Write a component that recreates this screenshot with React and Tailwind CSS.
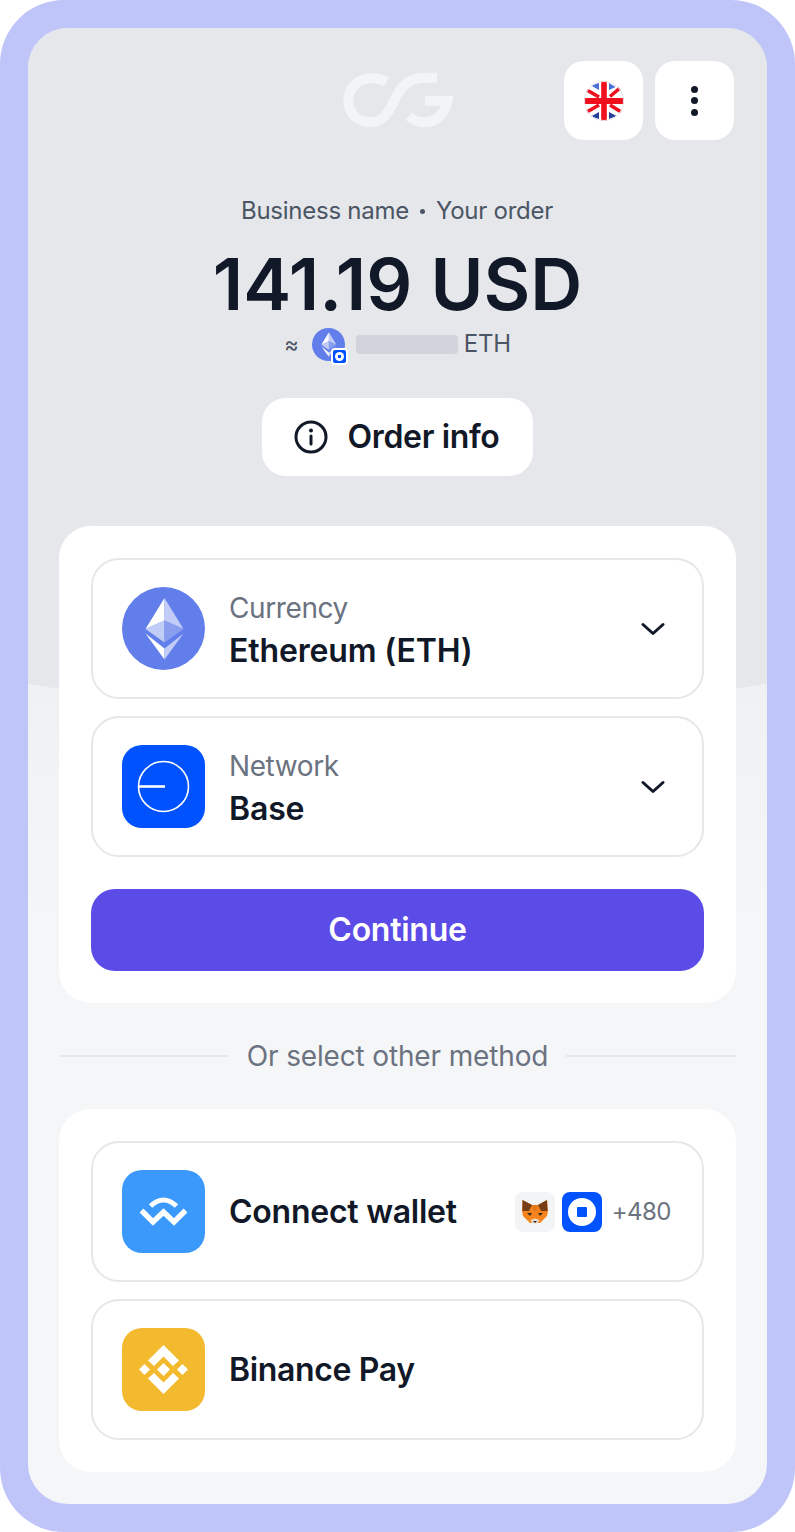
import React from "react";

function EthGlyph({ size }) {
  return (
    <svg width={size} height={size} viewBox="0 0 83 83" className="block">
      <circle cx="41.5" cy="41.5" r="41.5" fill="#627eea" />
      <path d="M42.5 11 L23.5 42 L42.5 33.5 Z" fill="#ffffff" />
      <path d="M42.5 11 L61.5 42 L42.5 33.5 Z" fill="#c1ccf7" />
      <path d="M23.5 42 L42.5 33.5 L42.5 55.5 Z" fill="#c1ccf7" />
      <path d="M61.5 42 L42.5 33.5 L42.5 55.5 Z" fill="#8a9ef0" />
      <path d="M23.5 46.5 L42.5 61.5 L42.5 72.5 Z" fill="#ffffff" />
      <path d="M61.5 46.5 L42.5 61.5 L42.5 72.5 Z" fill="#c1ccf7" />
    </svg>
  );
}

function Chevron() {
  return (
    <svg width="24" height="14" viewBox="0 0 24 14" fill="none" className="shrink-0">
      <path d="M2 2.5 L12 11.5 L22 2.5" stroke="#111827" strokeWidth="3" strokeLinecap="round" strokeLinejoin="round" />
    </svg>
  );
}

function BaseIcon() {
  return (
    <div className="flex h-[83px] w-[83px] shrink-0 items-center justify-center rounded-[20px] bg-[#0052ff]">
      <svg width="83" height="83" viewBox="0 0 83 83" fill="none">
        <circle cx="41.5" cy="41.5" r="25" stroke="#fff" strokeWidth="1.6" />
        <path d="M16.5 41.5 H43" stroke="#fff" strokeWidth="2.6" />
      </svg>
    </div>
  );
}

function WalletConnectIcon() {
  return (
    <div className="flex h-[83px] w-[83px] shrink-0 items-center justify-center rounded-[20px] bg-[#3b99fc]">
      <svg width="83" height="83" viewBox="0 0 83 83" fill="none">
        <path d="M28.5 36 Q41.5 24 54.5 36" stroke="#fff" strokeWidth="5" />
        <path d="M19.5 40.5 L31 52 L41.5 42 L52 52 L63.5 40.5" stroke="#fff" strokeWidth="5.4" />
      </svg>
    </div>
  );
}

function BinanceIcon() {
  return (
    <div className="flex h-[83px] w-[83px] shrink-0 items-center justify-center rounded-[20px] bg-[#f3ba2f]">
      <svg width="83" height="83" viewBox="0 0 83 83" fill="#fff">
        <path d="M41.5 17 L57 32.5 L51 38 L41.5 28.5 L32 38 L26 32.5 Z" />
        <path d="M41.5 66 L57 50.5 L51 45 L41.5 54.5 L32 45 L26 50.5 Z" />
        <path d="M41.5 35 L48 41.5 L41.5 48 L35 41.5 Z" />
        <path d="M22.5 36 L28 41.5 L22.5 47 L17 41.5 Z" />
        <path d="M60.5 36 L66 41.5 L60.5 47 L55 41.5 Z" />
      </svg>
    </div>
  );
}

function Fox() {
  return (
    <div className="flex h-10 w-10 items-center justify-center rounded-lg bg-[#f3f4f6]">
      <svg width="40" height="40" viewBox="0 0 40 40">
        <path d="M7.5 8 L17 13 H23 L32 8 L33 19 L32 24 L25 31 H15 L8 24 L7 19 Z" fill="#f5841f" />
        <path d="M7.5 8 L17 13 L14 19 L7.5 19 Z" fill="#763d16" />
        <path d="M32 8 L23 13 L26 19 L32.5 19 Z" fill="#763d16" />
        <path d="M17 13 H23 L21.5 19 H18.5 Z" fill="#e2761b" />
        <path d="M12 21 H17 L15 24 Z" fill="#3a2a1c" />
        <path d="M28 21 H23 L25 24 Z" fill="#3a2a1c" />
        <path d="M15.5 28 L20 26.5 L24.5 28 L22.5 31.5 H17.5 Z" fill="#eadccf" />
        <path d="M18 29 H22 L20 31 Z" fill="#2a2018" />
      </svg>
    </div>
  );
}

function Flag() {
  return (
    <svg width="40" height="40" viewBox="0 0 40 40">
      <defs>
        <clipPath id="flag-circle">
          <circle cx="20" cy="20" r="20" />
        </clipPath>
      </defs>
      <g clipPath="url(#flag-circle)">
        <rect width="40" height="40" fill="#fff" />
        <path d="M15 2 L15 9 L7 4.5 Z" fill="#4a6fd6" />
        <path d="M25 2 L25 9 L31.5 6 Z" fill="#4a6fd6" />
        <path d="M15 38 L15 31 L7 35.5 Z" fill="#27409c" />
        <path d="M25 38 L25 31 L32.5 35 Z" fill="#27409c" />
        <path d="M2 8.5 L15 16 M36 7 L26 15.5 M2 31.5 L15 24 M38 31.5 L26 24" stroke="#f00f1c" strokeWidth="3.6" fill="none" />
        <rect x="17.2" width="5.6" height="40" fill="#f00f1c" />
        <rect y="17" width="40" height="6" fill="#f00f1c" />
      </g>
      <circle cx="20" cy="20" r="19.5" fill="none" stroke="#e5e7eb" strokeWidth="1" />
    </svg>
  );
}

function SelectRow({ icon, label, value }) {
  return (
    <div className="flex h-[141px] items-center gap-6 rounded-[28px] border-2 border-[#e5e7eb] pl-[29px] pr-[37px]">
      {icon}
      <div className="flex min-w-0 flex-1 flex-col pt-[2px]">
        <span className="text-[28px] leading-[42px] tracking-[-0.4px] text-[#6b7280]">{label}</span>
        <span className="text-[32px] font-semibold leading-[43px] tracking-[-0.15px] text-[#111827]">{value}</span>
      </div>
      <Chevron />
    </div>
  );
}

export default function App() {
  return (
    <div
      className="h-[1532px] w-[795px] rounded-[64px] bg-[#c0c5f9] p-[28px]"
      style={{ fontFamily: "Inter, sans-serif" }}
    >
      <div className="relative h-full overflow-hidden rounded-[40px] bg-linear-to-b from-[#f0f1f3] from-[45%] to-[#f5f6f8] to-[60%]">
        <div className="absolute left-[-231px] top-0 h-[684px] w-[1200px] rounded-b-[600px_133px] bg-[#e5e7eb]" />
        <div className="relative flex h-full flex-col">
          <header className="relative flex justify-end gap-3 pr-[33px] pt-[33px]">
            <svg
              width="120"
              height="70"
              viewBox="0 0 120 70"
              fill="none"
              className="absolute left-[312px] top-[37px]"
            >
              <path
                d="M46.5 17 C42 14.5 37 13.3 32 13.3 C18 13.3 8.3 23 8.3 35.3 C8.3 48 18 57.3 31 57.3 C41 57.3 47 50 53 38 C59 26 65 12.7 85 12.7 L97 12.7"
                stroke="#f3f4f6"
                strokeWidth="10"
              />
              <path
                d="M85 35.7 H107.5 C105 49 96 57.3 84 57.3 C78 57.3 73 55 69 51"
                stroke="#f3f4f6"
                strokeWidth="10"
              />
            </svg>
            <button className="flex h-[79px] w-[79px] items-center justify-center rounded-[20px] bg-white">
              <Flag />
            </button>
            <button className="flex h-[79px] w-[79px] flex-col items-center justify-center gap-[4.5px] rounded-[20px] bg-white">
              <span className="h-[7px] w-[7px] rounded-full bg-[#111827]" />
              <span className="h-[7px] w-[7px] rounded-full bg-[#111827]" />
              <span className="h-[7px] w-[7px] rounded-full bg-[#111827]" />
            </button>
          </header>

          <div className="mt-[53px] flex flex-col items-center">
            <p className="flex items-center pr-px text-[24px] leading-[36px] tracking-[-0.25px] text-[#4b5563]">
              <span>Business name</span>
              <span className="mx-[11px] h-[5px] w-[5px] rounded-full bg-[#4b5563]" />
              <span>Your order</span>
            </p>
            <h1 className="mt-[19px] text-[72px] font-semibold leading-[72px] text-[#111827]">141.19 USD</h1>
            <div className="mt-[4px] flex h-[40px] items-center text-[24px] text-[#4b5563]">
              <span className="mr-[13px] text-[22px]">≈</span>
              <div className="relative mr-[11px] h-[33px] w-[33px]">
                <EthGlyph size={33} />
                <span className="absolute bottom-[-4px] right-[-3px] flex h-[17px] w-[17px] items-center justify-center rounded-[4px] border-2 border-white bg-[#0052ff]">
                  <span className="flex h-[9px] w-[9px] items-center justify-center rounded-full bg-white">
                    <span className="h-[3px] w-[3px] bg-[#0052ff]" />
                  </span>
                </span>
              </div>
              <span className="mr-[6px] h-[19px] w-[102px] rounded bg-[#d1d5db]" />
              <span className="tracking-[-0.2px]">ETH</span>
            </div>
            <button className="mt-[34px] flex h-[78px] w-[271px] items-center justify-center gap-5 rounded-[24px] bg-white pr-[2px]">
              <svg width="34" height="34" viewBox="0 0 34 34" fill="none">
                <circle cx="17" cy="17" r="15" stroke="#111827" strokeWidth="3" />
                <path d="M17 16 V24" stroke="#111827" strokeWidth="3" strokeLinecap="round" />
                <circle cx="17" cy="10.5" r="2" fill="#111827" />
              </svg>
              <span className="text-[32px] font-semibold tracking-[-0.35px] text-[#111827]">Order info</span>
            </button>
          </div>

          <div className="mx-[31px] mt-[50px] flex flex-col gap-[17px] rounded-[32px] bg-white p-[32px]">
            <SelectRow icon={<div className="shrink-0"><EthGlyph size={83} /></div>} label="Currency" value="Ethereum (ETH)" />
            <SelectRow icon={<BaseIcon />} label="Network" value="Base" />
            <button className="mt-[15px] h-[82px] rounded-[24px] bg-[#5b4be7] text-[32px] font-semibold tracking-[-0.25px] text-white">
              Continue
            </button>
          </div>

          <div className="mx-[31px] my-[36px] flex h-[34px] items-center gap-[18px]">
            <span className="h-[2px] flex-1 bg-[#e5e7eb]" />
            <span className="text-[28px] leading-[34px] tracking-[-0.15px] text-[#6b7280]">Or select other method</span>
            <span className="h-[2px] flex-1 bg-[#e5e7eb]" />
          </div>

          <div className="mx-[31px] flex flex-col gap-[17px] rounded-[32px] bg-white p-[32px]">
            <div className="flex h-[141px] items-center gap-6 rounded-[28px] border-2 border-[#e5e7eb] pl-[29px] pr-[31px]">
              <WalletConnectIcon />
              <span className="flex-1 text-[32px] font-semibold tracking-[-0.25px] text-[#111827]">Connect wallet</span>
              <div className="flex items-center">
                <Fox />
                <div className="ml-[7px] flex h-10 w-10 items-center justify-center rounded-lg bg-[#0052ff]">
                  <span className="flex h-7 w-7 items-center justify-center rounded-full bg-white">
                    <span className="h-[10px] w-[10px] rounded-[1px] bg-[#0052ff]" />
                  </span>
                </div>
                <span className="ml-[10px] text-[24px] tracking-[-0.5px] text-[#6b7280]">+480</span>
              </div>
            </div>
            <div className="flex h-[141px] items-center gap-6 rounded-[28px] border-2 border-[#e5e7eb] pl-[29px] pr-[31px]">
              <BinanceIcon />
              <span className="text-[32px] font-semibold tracking-[-0.35px] text-[#111827]">Binance Pay</span>
            </div>
          </div>
        </div>
      </div>
    </div>
  );
}
